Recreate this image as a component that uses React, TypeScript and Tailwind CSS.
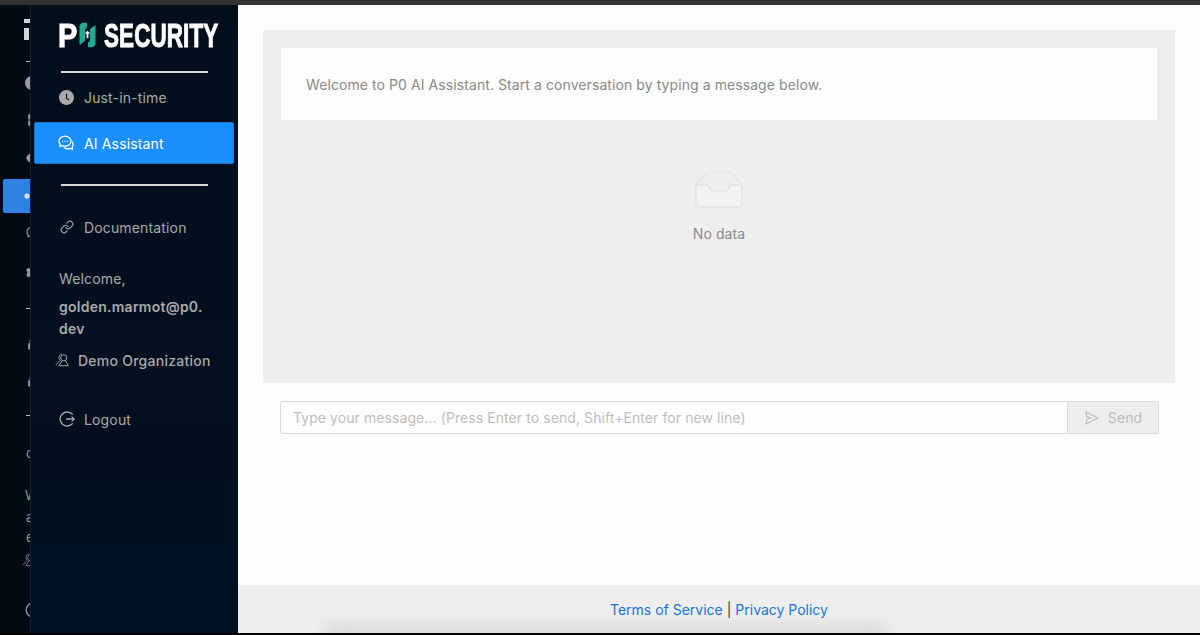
import { AiFillClockCircle, AiOutlineSend, AiFillEye, AiFillAppstore, AiFillSetting, AiFillLock } from "react-icons/ai";
import { Link } from "lucide-react";

const font = { fontFamily: "Inter, 'Noto Sans', sans-serif" };

function PeopleIcon({ className }: { className?: string }) {
  return (
    <svg viewBox="0 0 16 16" fill="none" stroke="currentColor" strokeWidth="1.1" strokeLinejoin="round" className={className}>
      <circle cx="10" cy="5.500" r="3.500" />
      <path d="M8.200 8.600L4.500 14.500H15.300L11.800 8.600" />
      <path d="M7.500 1.300A3.600 3.600 0 0 0 4.800 6.500C5 7.300 5.500 7.900 6 8.300L.8 13.800" />
    </svg>
  );
}

function ChatIcon({ className }: { className?: string }) {
  return (
    <svg viewBox="0 0 16 16" fill="none" stroke="currentColor" strokeWidth="1.200" strokeLinecap="round" strokeLinejoin="round" className={className}>
      <path d="M7 1.200C3.600 1.200 1 3.500 1 6.300c0 1.200.5 2.300 1.300 3.200l-.4 2 2.200-.9c.9.400 1.900.6 2.900.6 3.400 0 6-2.200 6-4.900S10.400 1.200 7 1.200z" />
      <path d="M14.200 6.800c.6.800.9 1.700.9 2.700 0 1-.4 1.900-1 2.700l.4 2.200-2.300-1c-.8.300-1.600.5-2.500.5-1.300 0-2.500-.4-3.400-1.100" />
      <path d="M4.600 6.400h.01M7 6.400h.01M9.400 6.400h.01" />
    </svg>
  );
}

function LogoutIcon({ className }: { className?: string }) {
  return (
    <svg viewBox="0 0 16 16" fill="none" stroke="currentColor" strokeWidth="1.300" strokeLinecap="round" strokeLinejoin="round" className={className}>
      <path d="M13.300 3.300A7 7 0 1 0 13.300 12.700" />
      <path d="M7.500 8H15.200M13 5.900L15.200 8 13 10.100" />
    </svg>
  );
}

function Logo() {
  return (
    <div className="flex h-[32px] items-center pl-[27px] text-white" style={{ fontFamily: "'Liberation Sans', sans-serif" }}>
      <span className="w-[21px] origin-left scale-x-[0.88] text-[33px] leading-none font-bold [-webkit-text-stroke:1px_white]">P</span>
      <svg viewBox="0 0 18 26" className="h-[26px] w-[17px]">
        <path d="M8.500 0H5C2 0 .5 2 .5 4v18c0 1 .5 1.500 1 1L6.500 19V7l2-2z" fill="#22ab8f" />
        <path d="M9.500 26H13c3 0 4.500-2 4.500-4V4c0-1-.5-1.500-1-1L11.500 7v12l-2 2z" fill="#22ab8f" />
        <path d="M9 8.500l3 3h-2v5H8v-5H6z" fill="#fff" />
      </svg>
      <span className="ml-[8px] w-[114px] origin-left scale-x-[0.68] text-[33px] leading-none font-bold whitespace-nowrap [-webkit-text-stroke:1px_white]">SECURITY</span>
    </div>
  );
}

function GhostRail() {
  return (
    <div className="flex w-[30px] shrink-0 flex-col overflow-hidden bg-[#020a14] pt-[14px] text-[#9a9a9a]">
      <div className="ml-[24px] h-[4px] w-[6px] bg-[#d5d5d5]" />
      <div className="mt-[5px] ml-[24px] h-[12px] w-[5px] bg-[#d5d5d5]" />
      <div className="mt-[21px] ml-[26px] h-px w-[4px] bg-[#bbbbbb]" />
      <div className="mt-[13px] h-[16px] pl-[24px]"><AiFillClockCircle size={16} /></div>
      <div className="mt-[21px] h-[16px] pl-[26px]"><AiFillAppstore size={16} /></div>
      <div className="mt-[22px] h-[16px] pl-[25px]"><AiFillEye size={16} /></div>
      <div className="mt-[13px] ml-[3px] flex h-[34px] items-center rounded-l-[2px] bg-[#2d82e4] pl-[21px] text-[#dfe6ee]"><AiFillClockCircle size={16} /></div>
      <div className="mt-[13px] h-[16px] pl-[26px]"><ChatIcon className="h-[15px] w-[15px]" /></div>
      <div className="mt-[23px] h-[16px] pl-[25px]"><AiFillSetting size={15} /></div>
      <div className="mt-[27px] ml-[26px] h-px w-[4px] bg-[#bbbbbb]" />
      <div className="mt-[28px] h-[16px] pl-[26px]"><AiFillLock size={14} /></div>
      <div className="mt-[21px] h-[16px] pl-[26px]"><AiFillLock size={14} /></div>
      <div className="mt-[25px] ml-[26px] h-px w-[4px] bg-[#bbbbbb]" />
      <div className="mt-[29px] h-[16px] pl-[26px] text-[13px] leading-[16px]">c</div>
      <div className="mt-[26px] h-[16px] pl-[25px] text-[13px] leading-[16px]">W</div>
      <div className="mt-[6px] h-[16px] pl-[26px] text-[13px] leading-[16px]">a</div>
      <div className="mt-[4px] h-[16px] pl-[26px] text-[13px] leading-[16px]">e</div>
      <div className="mt-[8px] h-[16px] pl-[22px] text-[#7d7d7d]"><PeopleIcon className="h-[14px] w-[14px]" /></div>
      <div className="mt-[33px] h-[16px] pl-[25px]"><LogoutIcon className="h-[16px] w-[16px]" /></div>
    </div>
  );
}

function Sidebar() {
  return (
    <aside className="flex w-[208px] shrink-0 flex-col border-l border-[#0d2238] bg-linear-to-b from-[#030e1b] to-[#001022] text-[14px] tracking-[0.15px] text-[#a9a9a9]">
      <div className="pt-[14px]">
        <Logo />
      </div>
      <div className="mx-[30px] mt-[20px] h-[2px] bg-[#d8d8d8]" />
      <div className="mt-[13px] flex h-[22px] items-center gap-[9px] pl-[27px]">
        <AiFillClockCircle size={17} />
        <span>Just-in-time</span>
      </div>
      <div className="mt-[14px] mr-[4px] ml-[3px] flex h-[42px] items-center gap-[10px] rounded-[2px] border border-[#1373d0] bg-[#1a8fff] pl-[24px] text-white">
        <ChatIcon className="h-[16px] w-[16px] -ml-[1px]" />
        <span>AI Assistant</span>
      </div>
      <div className="mx-[30px] mt-[20px] h-[2px] bg-[#d8d8d8]" />
      <div className="mt-[30px] flex h-[22px] items-center gap-[10px] pl-[28px]">
        <Link size={14} strokeWidth={1.9} className="ml-[1px]" />
        <span>Documentation</span>
      </div>
      <div className="mt-[30px] pr-[30px] pl-[28px] leading-[22px]">
        Welcome,
      </div>
      <div className="mt-[6px] w-[176px] pl-[28px] leading-[22px] font-semibold tracking-[0.25px] break-all">golden.marmot@p0.dev</div>
      <div className="mt-[9px] flex h-[22px] items-center gap-[9px] pl-[24px] font-medium tracking-[0.25px]">
        <PeopleIcon className="h-[14px] w-[14px]" />
        <span>Demo Organization</span>
      </div>
      <div className="-mr-px mt-[23px] flex h-[50px] items-center gap-[9px] border-r border-[#1c2a38] pl-[28px]">
        <LogoutIcon className="h-[16px] w-[16px]" />
        <span>Logout</span>
      </div>
    </aside>
  );
}

function Chat() {
  return (
    <div className="flex flex-1 flex-col bg-[#fdfdfd] pt-[25px] tracking-[0.08px]">
      <div className="mx-[25px] flex h-[353px] flex-col bg-[#eeeeee] p-[18px]">
        <div className="flex h-[72px] items-center bg-[#fdfdfd] pl-[25px] text-[14px] text-[#8a8a8a]">
          Welcome to P0 AI Assistant. Start a conversation by typing a message below.
        </div>
        <div className="mt-[52px] flex flex-col items-center">
          <svg viewBox="8 0 48 36" className="h-[36px] w-[48px]" fill="none" stroke="#dcdcdc">
            <path d="M55 12.760L44.854 1.258C44.367.474 43.656 0 42.907 0H21.093c-.749 0-1.460.474-1.947 1.257L9 12.761V22h46v-9.240z" />
            <path d="M41.613 15.931c0-1.605.994-2.930 2.227-2.931H55v18.137C55 33.260 53.680 35 52.050 35h-40.100C10.320 35 9 33.259 9 31.137V13h11.160c1.233 0 2.227 1.323 2.227 2.928v.022c0 1.605 1.005 2.901 2.237 2.901h14.752c1.232 0 2.237-1.308 2.237-2.913v-.007z" fill="#f2f2f2" />
          </svg>
          <div className="mt-[15px] text-[14px] leading-[22px] text-[#8c8c8c]">No data</div>
        </div>
      </div>
      <div className="mt-[18px] mr-[41px] ml-[42px] flex h-[33px]">
        <div className="flex flex-1 items-center rounded-l-[2px] border border-[#d9d9d9] bg-[#fdfdfd] px-[12px] text-[14px] text-[#bdbdbd]">
          Type your message... (Press Enter to send, Shift+Enter for new line)
        </div>
        <div className="flex w-[91px] items-center justify-center gap-[8px] rounded-r-[2px] border border-l-0 border-[#d9d9d9] bg-[#eeeeee] text-[14px] text-[#bbbbbb]">
          <AiOutlineSend size={16} />
          <span>Send</span>
        </div>
      </div>
      <div className="flex-1" />
      <div className="relative flex h-[48px] items-center justify-center overflow-hidden bg-[#eeeeee] text-[14px] tracking-normal text-[#333333]">
        <span className="relative z-10">
          <span className="text-[#1677d8]">Terms of Service</span> | <span className="text-[#1677d8]">Privacy Policy</span>
        </span>
        <div className="absolute -bottom-[10px] left-[85px] h-[20px] w-[565px] rounded-full bg-[#dcdcdc] blur-[6px]" />
      </div>
    </div>
  );
}

export default function App() {
  return (
    <div className="flex h-[635px] w-[1200px] flex-col overflow-hidden bg-black" style={font}>
      <div className="h-[5px] shrink-0 bg-[#333333]" />
      <div className="flex min-h-0 flex-1">
        <GhostRail />
        <Sidebar />
        <Chat />
      </div>
      <div className="h-[2px] shrink-0 bg-black" />
    </div>
  );
}
